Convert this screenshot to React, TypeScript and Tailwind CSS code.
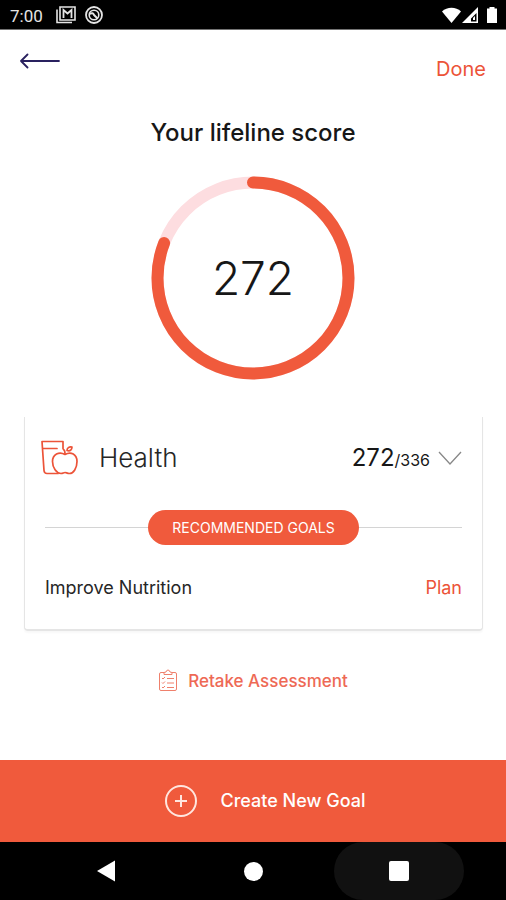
const SCORE = 272;
const MAX_SCORE = 336;

function StatusBar() {
  return (
    <div className="flex h-[30px] shrink-0 items-center border-b border-neutral-500 bg-black pr-2 pl-[10px] text-neutral-200">
      <span className="w-[46px] pt-0.5 font-[Roboto,sans-serif] text-[17px] leading-5">7:00</span>
      <svg className="h-5 w-5" viewBox="0 0 20 20" fill="none" stroke="currentColor" aria-hidden="true">
        <path d="M1 4.500V17.500H16" strokeWidth="1.600" />
        <path d="M4 2H19V15H4Z" strokeWidth="1.600" />
        <path d="M7.500 13V5L11.500 8.500L15.500 5V13" strokeWidth="1.800" />
      </svg>
      <svg className="ml-2 h-5 w-5" viewBox="0 0 20 20" fill="none" stroke="currentColor" aria-hidden="true">
        <circle cx="10" cy="10" r="8" strokeWidth="1.800" />
        <circle cx="10" cy="10" r="4.800" strokeWidth="1.600" />
        <path d="M5.500 9Q9 7 10 10L13.500 13.500" strokeWidth="2" />
      </svg>
      <svg className="ml-auto h-5 w-14 text-white" viewBox="0 0 56 20" fill="currentColor" aria-hidden="true">
        <path d="M0 6.500C5 1.500 14 1.500 19 6.500L9.500 18Z" />
        <path fillRule="evenodd" d="M36 2V18H20ZM34.500 8L29 13.500V16.500H34.500Z" />
        <path d="M31 13L33 11V15H31Z" />
        <path d="M47.500 2H52.500V3.500H55V18H45V3.500H47.500Z" />
      </svg>
    </div>
  );
}

function ScoreRing() {
  return (
    <div className="mx-auto mt-7 grid h-[204px] w-[204px] place-items-center">
      <svg className="col-start-1 row-start-1 h-full w-full" viewBox="0 0 204 204" fill="none" strokeWidth="12" aria-hidden="true">
        <circle cx="102" cy="102" r="95.500" stroke="#fddde0" />
        <circle
          cx="102"
          cy="102"
          r="95.500"
          stroke="#f05a3c"
          strokeLinecap="round"
          pathLength={MAX_SCORE}
          strokeDasharray={`${SCORE} ${MAX_SCORE}`}
          transform="rotate(-90 102 102)"
        />
      </svg>
      <span className="col-start-1 row-start-1 text-[46px] leading-none font-light text-neutral-900">{SCORE}</span>
    </div>
  );
}

function HealthIcon() {
  return (
    <svg className="h-9 w-[38px]" viewBox="0 0 38 36" fill="none" stroke="#ec5338" strokeWidth="1.700" strokeLinecap="round" strokeLinejoin="round" aria-hidden="true">
      <path d="M22 8.500V1.500H1L3 30.500Q3.300 33.500 6 33.500H17" />
      <path d="M2 8.500H16" />
      <path d="M24 14.500C18 11 11.500 14.500 11.500 21.500C11.500 27.500 15.500 33.500 20 33.500C22 33.500 22.500 32.500 24 32.500C25.500 32.500 26 33.500 28.500 33.500C32.500 33.500 36 28 36 21.500C36 14.500 30 11 24 14.500Z" />
      <path d="M24 14C24 11.500 23.500 10 22.500 9.500M26 10.500C26 8 28 6.500 31 7C31 10 29 11.500 26 10.500Z" />
    </svg>
  );
}

function ClipboardIcon() {
  return (
    <svg className="h-6 w-5" viewBox="0 0 20 24" fill="none" stroke="#ef806c" strokeWidth="1" aria-hidden="true">
      <path d="M6 3.500H3Q1.500 3.500 1.500 5V20Q1.500 21.500 3 21.500H17Q18.500 21.500 18.500 20V5Q18.500 3.500 17 3.500H14" />
      <path d="M6 5.500V3.500L8 3Q8.500 1 10 1Q11.500 1 12 3L14 3.500V5.500Z" />
      <path d="M4 9L5 10L7 8M9 9.500H16M4 13.500L5 14.500L7 12.500M9 14H16M4 18L5 19L7 17M9 18.500H16" />
    </svg>
  );
}

function HealthCard() {
  return (
    <section className="mr-[23px] ml-6 mt-[37px] rounded-b-sm border-x border-b-2 border-neutral-200 px-5 pb-[27px] shadow-[0_2px_2px_#00000008]">
      <div className="-ml-1 flex h-[82px] items-center">
        <HealthIcon />
        <h2 className="ml-[20px] text-[26px] leading-8 font-light text-neutral-800">Health</h2>
        <p className="ml-auto flex items-baseline text-neutral-900">
          <span className="text-2xl">{SCORE}</span>
          <span className="text-base">/{MAX_SCORE}</span>
        </p>
        <button type="button" aria-label="Toggle health details" className="ml-2">
          <svg className="h-4 w-6" viewBox="0 0 24 16" fill="none" stroke="#888888" strokeWidth="1.300" aria-hidden="true">
            <path d="M1 2L12 14L23 2" />
          </svg>
        </button>
      </div>
      <div className="mt-[11px] flex items-center">
        <span className="h-px flex-1 bg-neutral-300" />
        <span className="flex h-[35px] items-center rounded-full bg-[#f05a3c] px-6 text-sm text-white">RECOMMENDED GOALS</span>
        <span className="h-px flex-1 bg-neutral-300" />
      </div>
      <div className="mt-[29px] flex items-center justify-between text-lg">
        <span className="text-neutral-800">Improve Nutrition</span>
        <button type="button" className="text-[#ec5338]">Plan</button>
      </div>
    </section>
  );
}

export default function App() {
  return (
    <div className="flex min-h-screen flex-col bg-white font-[Inter,sans-serif]">
      <StatusBar />
      <header className="flex h-[62px] items-start justify-between px-5 pt-[21px]">
        <button type="button" aria-label="Back">
          <svg className="h-5 w-10" viewBox="0 0 40 20" fill="none" stroke="#29215f" strokeWidth="1.800" strokeLinecap="round" strokeLinejoin="round" aria-hidden="true">
            <path d="M39 10H1M7.500 3.500L1 10L7.500 16.500" />
          </svg>
        </button>
        <button type="button" className="mt-1 text-xl text-[#ec5338]">Done</button>
      </header>
      <main className="flex flex-1 flex-col pt-[26px]">
        <h1 className="text-center text-2xl leading-[30px] font-medium text-neutral-900">Your lifeline score</h1>
        <ScoreRing />
        <HealthCard />
        <button type="button" className="mx-auto mt-[38px] flex items-center gap-[10px] text-[17px] leading-6 font-medium text-[#ee6955]">
          <ClipboardIcon />
          Retake Assessment
        </button>
      </main>
      <button type="button" className="flex h-[82px] shrink-0 items-center justify-center gap-6 bg-[#f05a3c] pl-6 text-lg font-medium text-white">
        <svg className="h-8 w-8" viewBox="0 0 32 32" fill="none" stroke="#ffe6df" strokeWidth="2" aria-hidden="true">
          <circle cx="16" cy="16" r="15" />
          <path d="M10 16H22M16 10V22" />
        </svg>
        Create New Goal
      </button>
      <nav className="flex h-[58px] shrink-0 items-center justify-center gap-4 bg-black text-white">
        <button type="button" aria-label="System back" className="grid h-full w-[130px] place-items-center">
          <svg className="h-6 w-6" viewBox="0 0 24 24" fill="currentColor" aria-hidden="true">
            <path d="M2 12L20 1.500V22.500Z" />
          </svg>
        </button>
        <button type="button" aria-label="Home" className="grid h-full w-[130px] place-items-center">
          <span className="h-[19px] w-[19px] rounded-full bg-white" />
        </button>
        <button type="button" aria-label="Recent apps" className="grid h-full w-[130px] place-items-center rounded-full bg-[#111111]">
          <span className="h-5 w-5 rounded-xs bg-white" />
        </button>
      </nav>
    </div>
  );
}
